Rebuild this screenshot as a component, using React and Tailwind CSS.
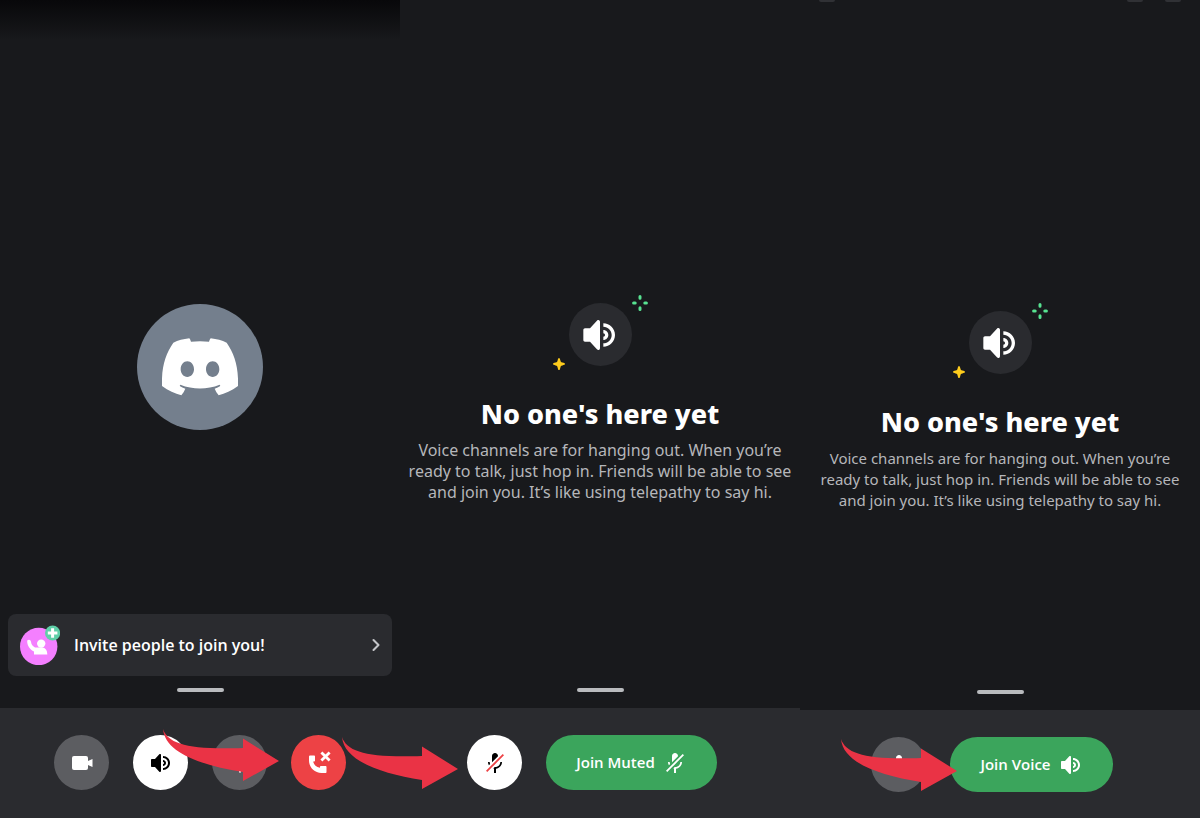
import clsx from "clsx";
import { ChevronRight } from "lucide-react";

const DiscordIcon = ({ className }) => (
  <svg viewBox="0 0 228 172" fill="currentColor" className={className} aria-hidden="true">
    <path
      fillRule="evenodd"
      d="M34 14C48 7 64 3 82 1C84 4 86 7 87 11C105 9 123 9 141 11C142 7 144 4 146 1C164 3 180 7 194 14C217 48 230 84 228 144C209 158 189 167 170 172C165 166 161 159 158 152C164 150 170 147 175 144L173 140C135 155 93 155 55 140L53 144C58 147 64 150 70 152C67 159 63 166 58 172C39 167 19 158 0 144C-2 84 11 48 34 14ZM76 70C65 70 56 80 56 94C56 107 65 117 76 117C87 117 96 107 96 94C96 80 87 70 76 70ZM152 70C141 70 132 80 132 94C132 107 141 117 152 117C163 117 172 107 172 94C172 80 163 70 152 70Z"
    />
  </svg>
);

const SpeakerIcon = ({ className }) => (
  <svg viewBox="0 0 24 24" fill="currentColor" className={className} aria-hidden="true">
    <path d="M11.383 3.079C11.009 2.925 10.579 3.01 10.293 3.296L6 8.002H3C2.45 8.002 2 8.453 2 9.002V15.002C2 15.552 2.45 16.002 3 16.002H6L10.293 20.71C10.579 20.996 11.009 21.082 11.383 20.927C11.757 20.772 12 20.407 12 20.002V4.002C12 3.599 11.757 3.232 11.383 3.079Z" />
    <path d="M14 5.002V7.002C16.757 7.002 19 9.246 19 12.002C19 14.759 16.757 17.002 14 17.002V19.002C17.86 19.002 21 15.863 21 12.002C21 8.143 17.86 5.002 14 5.002Z" />
    <path d="M14 9.002C15.654 9.002 17 10.349 17 12.002C17 13.657 15.654 15.002 14 15.002V13.002C14.551 13.002 15 12.553 15 12.002C15 11.451 14.551 11.002 14 11.002V9.002Z" />
  </svg>
);

const CameraIcon = ({ className }) => (
  <svg viewBox="0 0 24 24" fill="currentColor" className={className} aria-hidden="true">
    <rect x="2" y="5" width="16" height="14" rx="2" />
    <path d="M17 10.5L19 9.6L22.5 8V16L19 14.4L17 13.5Z" />
  </svg>
);

const MicIcon = ({ className }) => (
  <svg viewBox="0 0 24 24" fill="currentColor" className={className} aria-hidden="true">
    <path d="M14.99 11C14.99 12.66 13.66 14 12 14C10.34 14 9 12.66 9 11V5C9 3.34 10.34 2 12 2C13.66 2 15 3.34 15 5L14.99 11ZM12 16.1C14.76 16.1 17.3 14 17.3 11H19C19 14.42 16.28 17.24 13 17.72V21.5H11V17.72C7.72 17.23 5 14.41 5 11H6.7C6.7 14 9.24 16.1 12 16.1Z" />
  </svg>
);

const MicOffIcon = ({ className, slash = "currentColor" }) => (
  <svg viewBox="0 0 24 24" fill="currentColor" className={className} aria-hidden="true">
    <path d="M6.7 11H5C5 12.19 5.34 13.3 5.9 14.28L7.13 13.05C6.86 12.43 6.7 11.74 6.7 11Z" />
    <path d="M9.01 11.085C9.015 11.113 9.02 11.14 9.02 11.17L15 5.18V5C15 3.34 13.66 2 12 2C10.34 2 9 3.34 9 5V11C9 11.03 9.005 11.058 9.01 11.085Z" />
    <path d="M11.724 16.093L10.963 16.853L10.253 17.569C10.498 17.633 10.747 17.684 11 17.72V22H13V17.72C16.28 17.23 19 14.41 19 11H17.3C17.3 14 14.76 16.1 12 16.1C11.908 16.1 11.816 16.098 11.724 16.093Z" />
    <path fill={slash} d="M21 4.27L19.73 3L3 19.73L4.27 21L8.46 16.82L9.69 15.58L11.35 13.92L14.99 10.28L21 4.27Z" />
  </svg>
);

const HangUpIcon = ({ className }) => (
  <svg viewBox="0 0 24 24" fill="currentColor" className={className} aria-hidden="true">
    <path d="M2 5.5C2 5 2.4 4.6 3 4.6H7C7.55 4.6 8 5 8 5.5V9.5C8 10.05 7.55 10.5 7 10.5H6.2C6.8 13.8 9 16.2 13 16.8V16C13 15.45 13.45 15 14 15H18.5C19.05 15 19.5 15.45 19.5 16V20.9C19.5 21.45 19.05 21.9 18.5 21.9H14.5C7.4 21.9 2 16.4 2 9.4V5.5Z" />
    <path d="M14.4 1.4L22.6 9.6M22.6 1.4L14.4 9.6" stroke="currentColor" strokeWidth="2.8" />
  </svg>
);

const InviteIcon = ({ className }) => (
  <svg viewBox="0 0 40 40" className={className} aria-hidden="true">
    <circle cx="18.7" cy="21.5" r="18.7" fill="#f47fff" />
    <circle cx="21.2" cy="18.6" r="4.2" fill="#fff" />
    <path d="M7.2 15.5C9 14 10.7 15 11 16.8C11.3 19.6 12.3 21 15 22.4H22C25.5 22.6 27.3 25 27.3 29.5H14V26.5C10 24.5 7 21 7.2 15.5Z" fill="#fff" />
    <circle cx="32.6" cy="8" r="7.6" fill="#5fcfa8" />
    <path d="M32.6 3.2V12.8M27.8 8H37.4" stroke="#fff" strokeWidth="3" />
  </svg>
);

const Arrow = ({ className }) => (
  <svg
    viewBox="0 0 116 52"
    fill="#ea3345"
    className={clsx("pointer-events-none absolute z-10 h-[52px] w-[116px] max-w-none", className)}
    aria-hidden="true"
  >
    <path d="M0 0C5 15 26 21 80 19V9.5L116 32L80 52V43C36 36 2 23 0 0Z" />
  </svg>
);

function RoundButton({ label, className, children }) {
  return (
    <button
      aria-label={label}
      className={clsx("flex size-[55px] shrink-0 items-center justify-center rounded-full", className)}
    >
      {children}
    </button>
  );
}

function JoinButton({ children }) {
  return (
    <button className="flex h-[55px] items-center gap-2 rounded-full bg-[#3ba55c] px-[30px] font-['Open_Sans',sans-serif] text-[15px] font-semibold text-white">
      {children}
    </button>
  );
}

function Handle() {
  return <div className="mx-auto h-1 w-[47px] shrink-0 rounded-full bg-[#b9bbbe]" />;
}

function EmptyState({ className, textSize }) {
  return (
    <section className={clsx("flex flex-1 flex-col items-center justify-center px-2 text-center", className)}>
      <div className="relative flex size-[63px] items-center justify-center rounded-full bg-[#2a2b2f] text-white">
        <SpeakerIcon className="size-10" />
        <svg viewBox="0 0 16 16" className="absolute -top-2 -right-4 size-4" stroke="#57e391" strokeWidth="3" strokeLinecap="round" aria-hidden="true">
          <path d="M8 1.6V3.2M8 12.8V14.4M1.6 8H3.2M12.8 8H14.4" />
        </svg>
        <svg viewBox="0 0 12 12" className="absolute -bottom-1 -left-4 size-3" fill="#fdcb1c" aria-hidden="true">
          <path d="M6 0C6.8 0 7 1 7.4 2.6C7.7 4 8 4.3 9.4 4.6C11 5 12 5.2 12 6C12 6.8 11 7 9.4 7.4C8 7.7 7.7 8 7.4 9.4C7 11 6.8 12 6 12C5.2 12 5 11 4.6 9.4C4.3 8 4 7.7 2.6 7.4C1 7 0 6.8 0 6C0 5.2 1 5 2.6 4.6C4 4.3 4.3 4 4.6 2.6C5 1 5.2 0 6 0Z" />
        </svg>
      </div>
      <h2 className="mt-[30px] text-[27px] leading-9 font-extrabold text-white">No one's here yet</h2>
      <p className={clsx("mt-2 leading-[21px] text-[#b5b6ba]", textSize)}>
        Voice channels are for hanging out. When you’re
        <br />
        ready to talk, just hop in. Friends will be able to see
        <br />
        and join you. It’s like using telepathy to say hi.
      </p>
    </section>
  );
}

export default function App() {
  return (
    <main className="grid min-h-screen grid-cols-3 bg-[#18191c] font-['Noto_Sans',sans-serif]">
      <div className="flex flex-col">
        <div className="h-10 bg-linear-to-b from-[#08080a] to-[#18191c]" />
        <section className="flex flex-1 items-center justify-center pt-20">
          <div className="flex size-[126px] items-center justify-center rounded-full bg-[#747f8d] text-white">
            <DiscordIcon className="w-[76px]" />
          </div>
        </section>
        <button className="mx-2 flex h-[62px] items-center rounded-lg bg-[#2a2b2f] pr-[6px] pl-3 text-left">
          <InviteIcon className="size-10" />
          <span className="ml-[14px] flex-1 font-['Open_Sans',sans-serif] text-base font-semibold text-white">
            Invite people to join you!
          </span>
          <ChevronRight className="size-5 text-[#c4c5c9]" strokeWidth={2.5} />
        </button>
        <div className="pt-3 pb-4">
          <Handle />
        </div>
        <footer className="flex h-[110px] items-start justify-center gap-6 bg-[#2a2b2f] pt-[27px]">
          <RoundButton label="Camera" className="bg-[#5c5d61] text-white">
            <CameraIcon className="size-6" />
          </RoundButton>
          <div className="relative">
            <RoundButton label="Speaker" className="bg-white text-black">
              <SpeakerIcon className="size-6" />
            </RoundButton>
            <Arrow className="-top-1.5 left-[30px]" />
          </div>
          <RoundButton label="Mute" className="bg-[#5c5d61] text-white">
            <MicIcon className="size-6" />
          </RoundButton>
          <div className="relative">
            <RoundButton label="Leave call" className="bg-[#ed4245] text-white">
              <HangUpIcon className="size-6" />
            </RoundButton>
            <Arrow className="top-0.5 left-[51px]" />
          </div>
        </footer>
      </div>

      <div className="flex flex-col">
        <EmptyState className="pt-[118px]" textSize="text-base" />
        <div className="pb-4">
          <Handle />
        </div>
        <footer className="flex h-[110px] items-start justify-center gap-6 bg-[#2a2b2f] pt-[27px] pr-4">
          <RoundButton label="Unmute" className="bg-white text-black">
            <MicOffIcon className="size-6" slash="#ed4245" />
          </RoundButton>
          <JoinButton>
            Join Muted
            <MicOffIcon className="size-6" />
          </JoinButton>
        </footer>
      </div>

      <div className="flex flex-col">
        <div className="flex justify-end gap-[22px] px-[19px]">
          <div className="mr-auto h-0.5 w-4 rounded-b-full bg-[#303135]" />
          <div className="h-0.5 w-4 rounded-b-full bg-[#303135]" />
          <div className="h-0.5 w-4 rounded-b-full bg-[#303135]" />
        </div>
        <EmptyState className="pt-[130px]" textSize="text-[15px]" />
        <div className="pb-4">
          <Handle />
        </div>
        <footer className="flex h-[108px] items-start justify-center gap-6 bg-[#2a2b2f] pt-[27px] pr-4">
          <div className="relative">
            <RoundButton label="Mute" className="bg-[#5c5d61] text-white">
              <MicIcon className="size-6" />
            </RoundButton>
            <Arrow className="top-0.5 -left-[30px]" />
          </div>
          <JoinButton>
            Join Voice
            <SpeakerIcon className="size-6" />
          </JoinButton>
        </footer>
      </div>
    </main>
  );
}
